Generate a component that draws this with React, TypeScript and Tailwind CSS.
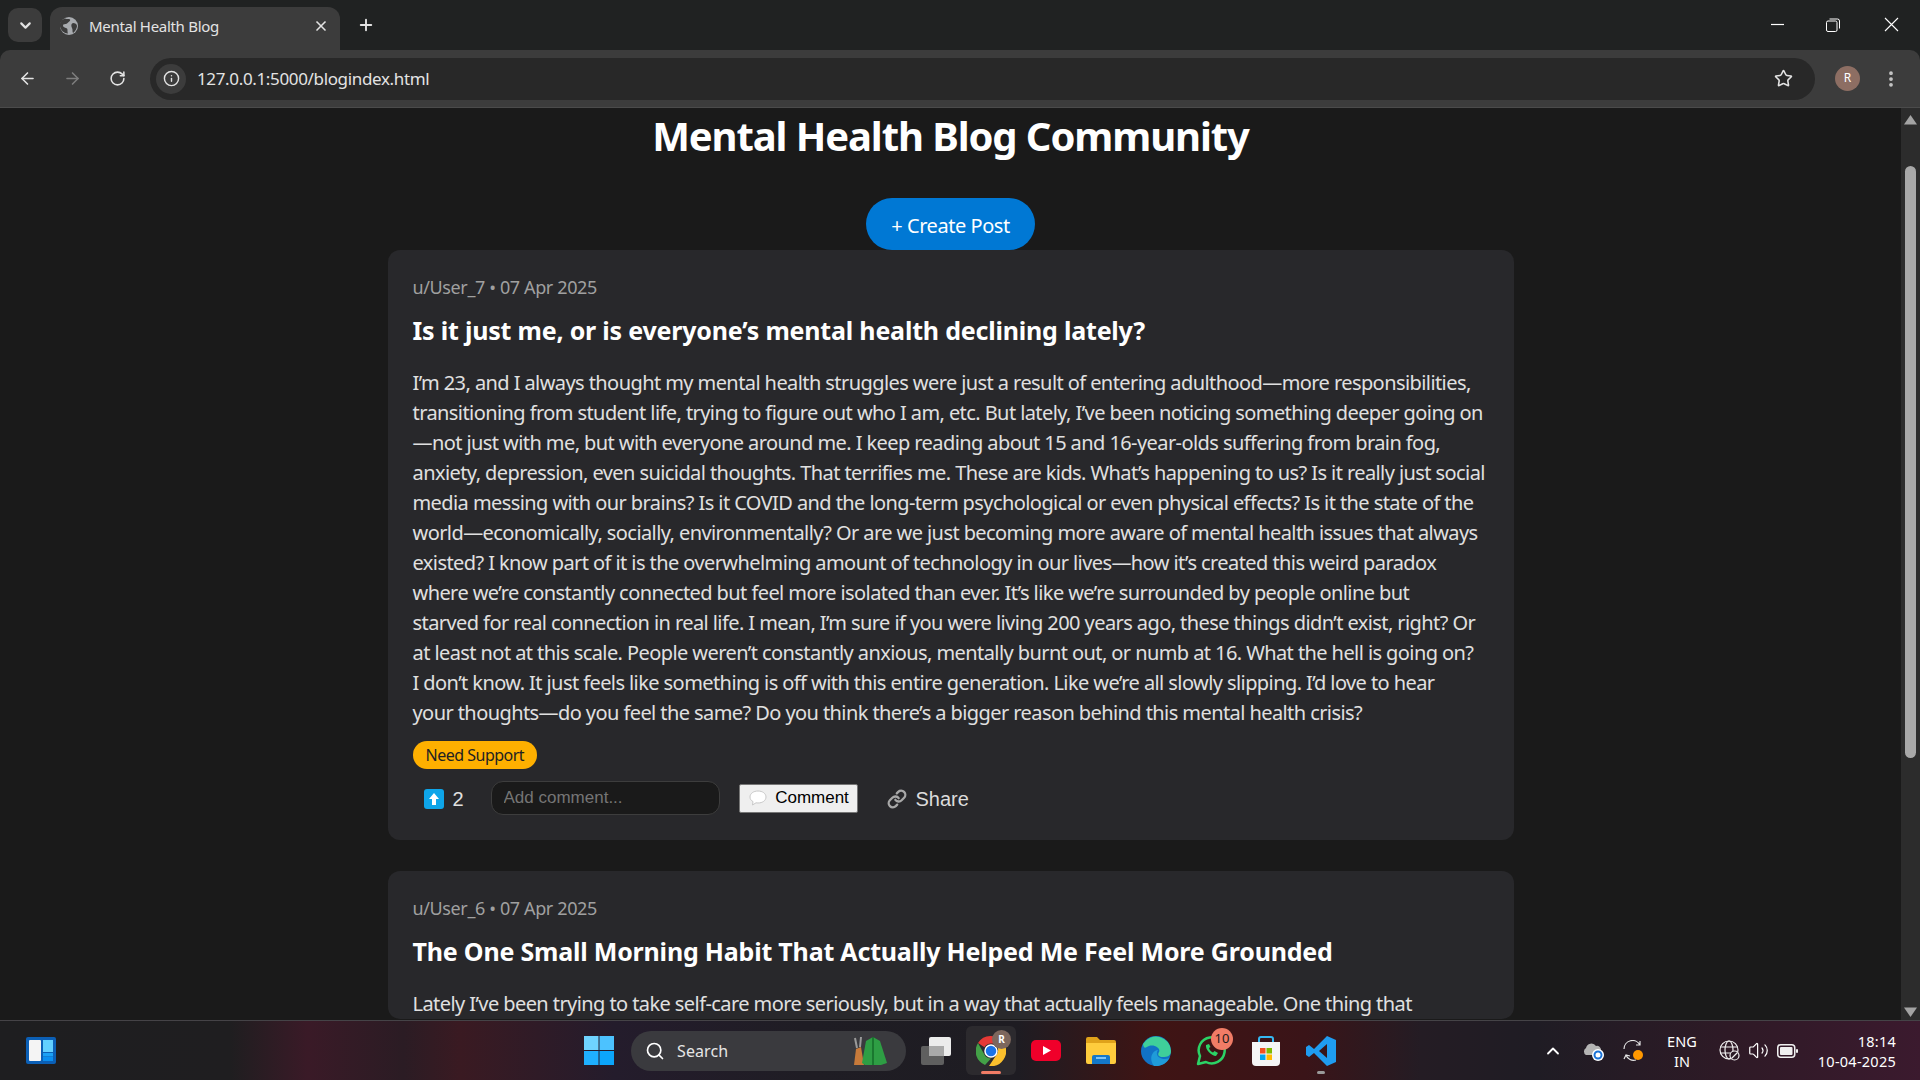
import { ArrowLeft, ArrowRight, ChevronDown, ChevronUp, Info, Link, Minus, MoreVertical, Plus, RotateCw, Search, Star, Volume2, X } from 'lucide-react'

const firstPost = [
    'I’m 23, and I always thought my mental health struggles were just a result of entering adulthood—more responsibilities,',
    'transitioning from student life, trying to figure out who I am, etc. But lately, I’ve been noticing something deeper going on',
    '—not just with me, but with everyone around me. I keep reading about 15 and 16-year-olds suffering from brain fog,',
    'anxiety, depression, even suicidal thoughts. That terrifies me. These are kids. What’s happening to us? Is it really just social',
    'media messing with our brains? Is it COVID and the long-term psychological or even physical effects? Is it the state of the',
    'world—economically, socially, environmentally? Or are we just becoming more aware of mental health issues that always',
    'existed? I know part of it is the overwhelming amount of technology in our lives—how it’s created this weird paradox',
    'where we’re constantly connected but feel more isolated than ever. It’s like we’re surrounded by people online but',
    'starved for real connection in real life. I mean, I’m sure if you were living 200 years ago, these things didn’t exist, right? Or',
    'at least not at this scale. People weren’t constantly anxious, mentally burnt out, or numb at 16. What the hell is going on?',
    'I don’t know. It just feels like something is off with this entire generation. Like we’re all slowly slipping. I’d love to hear',
    'your thoughts—do you feel the same? Do you think there’s a bigger reason behind this mental health crisis?',
]

const BrowserChrome = () => (
    <header className="shrink-0 bg-[#202222] text-[#e3e3e3]">
        <div className="flex h-[50px] items-end">
            <div className="mb-2 ml-2 flex h-[34px] w-[34px] items-center justify-center rounded-[10px] bg-[#3c3c3c]">
                <ChevronDown size={17} strokeWidth={3} />
            </div>
            <div className="ml-[8px] flex h-[43px] w-[290px] items-center rounded-t-[12px] bg-[#3c3c3c] pb-[5px] pl-[10px] pr-[11px]">
                <svg width="18" height="18" viewBox="0 0 18 18">
                    <circle cx="9" cy="9" r="9" fill="#a8abaf" />
                    <path d="M5 1.5c2 1 4 0 5 1s-2 3-3 4-4 0-4 2 3 2 4 3 0 3 1 5c-4 0-7-3-8-7s2-7 5-8zM13 6c2 0 4 1 4 3s-2 6-4 7c-1-2 0-3-1-5s-1-4 1-5z" fill="#3c3c3c" />
                </svg>
                <span className="ml-[11px] flex-1 text-[15px] tracking-[-0.3px]">Mental Health Blog</span>
                <X size={16} strokeWidth={2.5} />
            </div>
            <Plus className="mb-[16px] ml-[17px]" size={18} strokeWidth={2.5} />
            <div className="flex-1" />
            <div className="mb-[18px] flex items-center text-white">
                <svg width="15" height="15" viewBox="0 0 15 15"><path d="M1 7.500H14" stroke="currentColor" strokeWidth="1.200" /></svg>
                <svg className="ml-[41px]" width="14" height="14" viewBox="0 0 14 14" fill="none" stroke="currentColor">
                    <rect x="0.5" y="3" width="10.5" height="10.5" rx="1.5" />
                    <path d="M3.5 1H11.5A2 2 0 0 1 13.5 3V10.5" />
                </svg>
                <svg className="ml-[44px] mr-[21px]" width="15" height="15" viewBox="0 0 15 15"><path d="M1 1 14 14M14 1 1 14" stroke="currentColor" strokeWidth="1.100" /></svg>
            </div>
        </div>
        <div className="flex h-[58px] items-center rounded-t-[10px] border-b border-[#4b4b4b] bg-[#3c3c3c]">
            <ArrowLeft className="ml-[18px]" size={19} strokeWidth={2} />
            <ArrowRight className="ml-[26px] text-[#7d7d7d]" size={19} strokeWidth={2} />
            <RotateCw className="ml-[27px]" size={17} strokeWidth={2.2} />
            <div className="ml-[24px] flex h-[42px] w-[1665px] items-center rounded-full bg-[#282828] pl-[6px] pr-[22px]">
                <div className="flex h-[30px] w-[30px] items-center justify-center rounded-full bg-[#3c3c3c]">
                    <Info size={17} strokeWidth={2} />
                </div>
                <span className="ml-[11px] flex-1 text-[17px] tracking-[-0.35px]">127.0.0.1:5000/blogindex.html</span>
                <Star size={19} strokeWidth={2} />
            </div>
            <div className="ml-[20px] mt-[-1px] flex h-[25px] w-[25px] items-center justify-center rounded-full bg-[#8d6e63] text-[12px] text-white">R</div>
            <MoreVertical className="ml-[21px] text-[#c7c7c7]" size={20} strokeWidth={2.5} />
        </div>
    </header>
)

const PostHeader = ({ meta, title }: { meta: string; title: string }) => (
    <>
        <div className="text-[18px] leading-[25px] tracking-[-0.38px] text-[#a0a0a0]">{meta}</div>
        <h2 className="mt-[13px] text-[25px] font-bold leading-[34px] tracking-[-0.2px] text-white">{title}</h2>
    </>
)

const Page = () => (
    <div className="flex min-h-0 flex-1 bg-[#1a1a1a]">
        <main className="min-w-0 flex-1 overflow-hidden">
            <h1 className="mt-[6px] text-center text-[40px] font-bold leading-[44px] tracking-[-1.1px] text-white">
                Mental Health Blog Community
            </h1>
            <div className="mt-[40px] flex justify-center">
                <button className="h-[52px] w-[169px] rounded-[26px] bg-[#0078d4] pt-[4px] text-[20px] tracking-[-0.45px] text-white">+ Create Post</button>
            </div>
            <article className="mx-auto w-[1126px] rounded-[12px] bg-[#28282b] px-[25px] pb-[25px] pt-[25px]">
                <PostHeader meta="u/User_7 • 07 Apr 2025" title="Is it just me, or is everyone’s mental health declining lately?" />
                <div className="mt-[21px] whitespace-nowrap text-[20px] leading-[30px] tracking-[-0.58px] text-[#e0e0e0]">
                    {firstPost.map((line) => (
                        <div key={line}>{line}</div>
                    ))}
                </div>
                <span className="mt-[13px] inline-flex h-[28px] items-center rounded-full bg-[#ffb000] px-[13px] text-[16px] tracking-[-0.5px] text-[#222]">Need Support</span>
                <div className="mt-[12px] flex items-center font-['Liberation_Sans',sans-serif]">
                    <span className="ml-[11px] mt-[2px] flex h-[20px] w-[20px] items-center justify-center rounded-[3px] bg-[#0ea5e9]">
                        <svg width="12" height="14" viewBox="0 0 12 14"><path d="M6 1 11 7H8V13H4V7H1Z" fill="#fff" /></svg>
                    </span>
                    <span className="ml-[9px] mt-[2px] w-[12px] text-[20px] text-[#e0e0e0]">2</span>
                    <input className="ml-[26px] h-[34px] w-[229px] rounded-[12px] border border-[#3d3d3d] bg-[#1a1a1a] px-[12px] text-[17px] outline-none placeholder:text-[#757575]" placeholder="Add comment..." readOnly />
                    <button className="ml-[19px] flex h-[29px] w-[119px] items-center justify-center gap-[8px] rounded-[2px] border border-[#767676] bg-[#efefef] pl-[2px] text-[17px] text-black">
                        <svg width="18" height="16" viewBox="0 0 18 16"><path d="M9 1C4.5 1 1 3.5 1 7c0 2 1 3.5 3 4.6L3.5 15 7 12.8c.6.1 1.3.2 2 .2 4.500 0 8-2.500 8-6S13.500 1 9 1z" fill="#fff" stroke="#c8c8c8" /></svg>
                        Comment
                    </button>
                    <Link className="ml-[29px] mt-[2px] text-[#a8a8a8]" size={20} strokeWidth={2.8} />
                    <span className="ml-[9px] mt-[2px] text-[20px] text-[#dcdcdc]">Share</span>
                </div>
            </article>
            <article className="mx-auto mt-[31px] w-[1126px] rounded-[12px] bg-[#28282b] px-[25px] pt-[25px]">
                <PostHeader meta="u/User_6 • 07 Apr 2025" title="The One Small Morning Habit That Actually Helped Me Feel More Grounded" />
                <div className="mt-[21px] whitespace-nowrap text-[20px] leading-[30px] tracking-[-0.58px] text-[#e0e0e0]">
                    Lately I’ve been trying to take self-care more seriously, but in a way that actually feels manageable. One thing that
                </div>
            </article>
        </main>
        <div className="flex w-[19px] shrink-0 flex-col items-center bg-[#2c2c2c]">
            <svg className="mt-[7px]" width="13" height="10" viewBox="0 0 13 10"><path d="M6.5 0 13 9.500H0Z" fill="#a3a3a3" /></svg>
            <div className="mt-[41px] h-[592px] w-[11px] rounded-t-full rounded-b-full bg-[#a8a8a8]" />
            <div className="flex-1" />
            <svg className="mb-[3px]" width="13" height="10" viewBox="0 0 13 10"><path d="M0 .5H13L6.500 10Z" fill="#a3a3a3" /></svg>
        </div>
    </div>
)

const ChromeIcon = () => (
    <svg width="30" height="30" viewBox="0 0 30 30">
        <path d="M15 0A15 15 0 0 1 28 7.500H15A7.500 7.500 0 0 0 8.500 11.200L2 7A15 15 0 0 1 15 0Z" fill="#e53935" />
        <path d="M2 7 8.500 18.700A7.500 7.500 0 0 0 15 22.500L9 29A15 15 0 0 1 2 7Z" fill="#43a047" />
        <path d="M28 7.500A15 15 0 0 1 13 30L20.500 18.800A7.500 7.500 0 0 0 21.500 11.200Z" fill="#fbc02d" />
        <circle cx="15" cy="15" r="6" fill="#1a73e8" stroke="#fff" strokeWidth="1.5" />
    </svg>
)

const Taskbar = () => (
    <footer className="relative flex h-[60px] shrink-0 items-center border-t border-[#454347] bg-[linear-gradient(90deg,#1e1e20_0%,#1f1e20_12%,#3a1a27_16%,#2b1c24_21%,#3a1a22_24%,#241c2c_32%,#1f1d24_42%,#1e1c22_53%,#3f1414_60%,#3a1418_68%,#241c24_74%,#1f1c24_80%,#2e1a26_90%,#3b1a2e_100%)] text-white">
        <svg className="ml-[26px]" width="30" height="27" viewBox="0 0 30 27">
            <rect width="30" height="27" rx="2" fill="#0b5fb5" />
            <rect x="3" y="3" width="12" height="21" rx="1" fill="#f4f4f4" />
            <rect x="17" y="3" width="10" height="12" fill="#62d0ff" />
            <rect x="17" y="16" width="10" height="3.500" fill="#1ba1f5" />
            <rect x="17" y="20" width="10" height="4" fill="#0a8ff0" />
        </svg>
        <svg className="ml-[528px]" width="30" height="29" viewBox="0 0 30 29">
            <rect width="14.500" height="14" fill="#6fd3ff" />
            <rect x="15.500" width="14.500" height="14" fill="#4cc2ff" />
            <rect y="15" width="14.500" height="14" fill="#1fb0ff" />
            <rect x="15.500" y="15" width="14.500" height="14" fill="#0ca5fb" />
        </svg>
        <div className="ml-[17px] flex h-[40px] w-[275px] items-center rounded-full bg-[#3a3a3e] pl-[14px]">
            <Search size={20} strokeWidth={2} />
            <span className="ml-[12px] text-[16px] tracking-[0.1px] text-[#e6e6e6]">Search</span>
            <svg className="ml-auto mr-[18px]" width="36" height="32" viewBox="0 0 36 32">
                <path d="M2 30 4 14 9 12 12 30Z" fill="#c77a3a" />
                <path d="M5 13 3 3M8 12 9 2" stroke="#9a9a9a" strokeWidth="2" />
                <path d="M14 6 21 2 28 6 35 28 29 30H13L10 28Z" fill="#2e9e44" />
                <path d="M21 2V30" stroke="#156b28" strokeWidth="1.500" />
            </svg>
        </div>
        <svg className="ml-[15px]" width="30" height="28" viewBox="0 0 30 28">
            <rect y="9" width="23" height="19" rx="2" fill="#5f5f5f" />
            <rect x="8" width="22" height="19" rx="2" fill="#ececec" />
            <rect x="8" y="9" width="15" height="10" fill="#a9a9a9" />
        </svg>
        <div className="relative ml-[15px] flex h-[49px] w-[50px] items-center justify-center rounded-[6px] bg-[#2c2a2e]">
            <ChromeIcon />
            <span className="absolute left-[26px] top-[4px] flex h-[19px] w-[19px] items-center justify-center rounded-full bg-[#7d675d] text-[10px] font-bold">R</span>
            <span className="absolute bottom-[1px] left-[15px] h-[3px] w-[20px] rounded-full bg-[#f07c66]" />
        </div>
        <svg className="ml-[15px]" width="30" height="22" viewBox="0 0 30 22">
            <rect width="30" height="21" rx="5" fill="#f0002a" />
            <path d="M12 6 20 10.500 12 15Z" fill="#fff" />
        </svg>
        <svg className="ml-[25px]" width="30" height="27" viewBox="0 0 30 27">
            <path d="M0 2A2 2 0 0 1 2 0H11L14 3H28A2 2 0 0 1 30 5V8H0Z" fill="#e0a21a" />
            <path d="M0 6H30V25A2 2 0 0 1 28 27H2A2 2 0 0 1 0 25Z" fill="#ffcc3d" />
            <path d="M6 27V20A2 2 0 0 1 8 18H22A2 2 0 0 1 24 20V27Z" fill="#1478c9" />
            <rect x="10" y="20" width="10" height="2" fill="#7fc4f5" />
        </svg>
        <svg className="ml-[25px]" width="30" height="30" viewBox="0 0 30 30">
            <circle cx="15" cy="15" r="15" fill="#1172c5" />
            <path d="M2 8A15 15 0 0 1 30 15C30 20 26 21 22 21 18 21 16 19 18 16 20 13 14 8 8 10 5 11 3 14 2 8Z" fill="#3fcf9a" />
            <path d="M13 30C8 24 10 15 17 14 14 18 17 23 24 23 27 23 28 22 29 21 27 26 21 31 13 30Z" fill="#1f9bd9" />
        </svg>
        <div className="relative ml-[25px] flex h-[30px] w-[30px] items-center justify-center">
            <svg width="30" height="30" viewBox="0 0 30 30" fill="none">
                <path d="M2 28 4 20A13 13 0 1 1 10 26Z" stroke="#2bd366" strokeWidth="2.500" strokeLinejoin="round" />
                <path d="M10 9C9 13 15 20 20 20L22 17 18.500 15 17 16.500C15 16 13.500 14 13 12L14.500 11 13 8Z" fill="#2bd366" />
            </svg>
            <span className="absolute -top-[8px] left-[15px] flex h-[22px] w-[22px] items-center justify-center rounded-full bg-[#f07c66] text-[13px] text-[#1a1a1a]">10</span>
        </div>
        <svg className="ml-[25px]" width="30" height="30" viewBox="0 0 30 30">
            <path d="M8 6V3A2 2 0 0 1 10 1H20A2 2 0 0 1 22 3V6" fill="none" stroke="#35b8f2" strokeWidth="2" />
            <path d="M1 6H29V26A4 4 0 0 1 25 30H5A4 4 0 0 1 1 26Z" fill="#f5f5f5" />
            <rect x="9" y="12" width="5.500" height="5.500" fill="#f25022" />
            <rect x="15.500" y="12" width="5.500" height="5.500" fill="#7fba00" />
            <rect x="9" y="18.500" width="5.500" height="5.500" fill="#00a4ef" />
            <rect x="15.500" y="18.500" width="5.500" height="5.500" fill="#ffb900" />
        </svg>
        <div className="relative ml-[25px] h-[30px] w-[30px]">
            <svg width="30" height="30" viewBox="0 0 30 30">
                <path d="M21 0 30 4V26L21 30 8 17 3 21 0 19V11L3 9 8 13ZM21 8 13 15 21 22Z" fill="#1f9cf0" />
            </svg>
            <span className="absolute -bottom-[8px] left-[11px] h-[3px] w-[8px] rounded-full bg-[#9a9a9a]" />
        </div>
        <ChevronUp className="ml-[207px]" size={20} strokeWidth={2.2} />
        <svg className="ml-[20px]" width="21" height="20" viewBox="0 0 21 20">
            <path d="M3 14A4 4 0 0 1 3 7 5.500 5.500 0 0 1 13 5 4 4 0 0 1 18 9L12 14Z" fill="#b4b4b4" />
            <circle cx="15" cy="14" r="6" fill="#fff" />
            <circle cx="15" cy="14" r="3.500" fill="none" stroke="#1a73d8" strokeWidth="2" />
        </svg>
        <svg className="ml-[19px]" width="21" height="22" viewBox="0 0 21 22" fill="none" stroke="#e6e6e6" strokeWidth="1.200">
            <path d="M1 9A8.500 8.500 0 0 1 17 5M17 1V5H13" />
            <path d="M13 20A8 8 0 0 1 3 15M1 19 3 15 7 16" />
            <circle cx="15" cy="15" r="5" fill="#ff9800" stroke="none" />
        </svg>
        <div className="ml-[23px] w-[30px] text-center text-[14.500px] leading-[20px] tracking-[0.1px]">
            <div>ENG</div>
            <div>IN</div>
        </div>
        <svg className="ml-[22px]" width="21" height="21" viewBox="0 0 21 21" fill="none" stroke="#f0f0f0" strokeWidth="1.200">
            <circle cx="10" cy="10" r="9" />
            <ellipse cx="10" cy="10" rx="4" ry="9" />
            <path d="M1 7H19M1 13H19" />
            <circle cx="15.500" cy="15.500" r="4.500" fill="#2a1c26" />
            <path d="M12.500 18.500 18.500 12.500" />
        </svg>
        <Volume2 className="ml-[8px]" size={21} strokeWidth={1.400} />
        <svg className="ml-[8px]" width="21" height="14" viewBox="0 0 21 14">
            <rect x=".75" y=".75" width="17" height="12.500" rx="3" fill="none" stroke="#f0f0f0" strokeWidth="1.500" />
            <rect x="3" y="3" width="12.500" height="8" rx="1" fill="#f0f0f0" />
            <rect x="19" y="5" width="2" height="4" rx="1" fill="#f0f0f0" />
        </svg>
        <div className="ml-auto mr-[24px] text-right text-[14.500px] leading-[20px] tracking-[0.25px]">
            <div>18:14</div>
            <div>10-04-2025</div>
        </div>
    </footer>
)

export default function App() {
    return (
        <div className="flex h-screen w-full flex-col overflow-hidden font-['Noto_Sans',sans-serif]">
            <BrowserChrome />
            <Page />
            <Taskbar />
        </div>
    )
}
